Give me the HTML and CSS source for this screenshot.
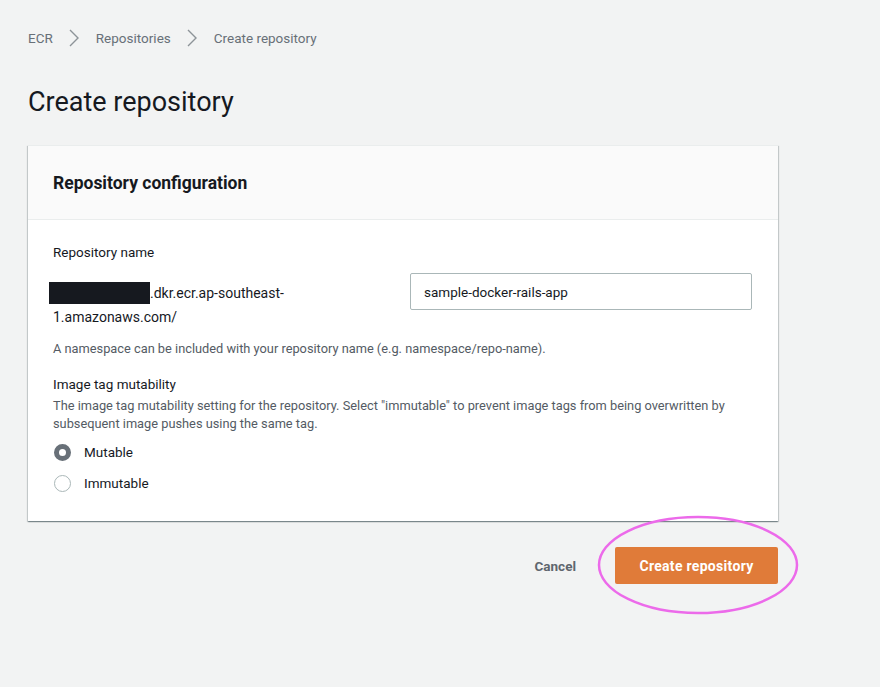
FILE: index.html
```html
<!DOCTYPE html>
<html>
<head>
<meta charset="utf-8">
<link rel="stylesheet" href="styles.css">
</head>
<body>
<div class="page">
  <nav class="crumbs">
    <span class="crumb">ECR</span>
    <svg class="chev" width="12" height="20" viewBox="0 0 12 20"><path d="M2 2 L10 10 L2 18" fill="none" stroke="#8d9398" stroke-width="1.4"/></svg>
    <span class="crumb">Repositories</span>
    <svg class="chev" width="12" height="20" viewBox="0 0 12 20"><path d="M2 2 L10 10 L2 18" fill="none" stroke="#8d9398" stroke-width="1.4"/></svg>
    <span class="crumb">Create repository</span>
  </nav>
  <h1 class="title">Create repository</h1>
  <section class="card">
    <header class="card-head">Repository configuration</header>
    <div class="card-body">
      <div class="label">Repository name</div>
      <div class="name-row">
        <div class="prefix"><span class="redact"></span>.dkr.ecr.ap-southeast-<br>1.amazonaws.com/</div>
        <div class="input">sample-docker-rails-app</div>
      </div>
      <div class="hint">A namespace can be included with your repository name (e.g. namespace/repo-name).</div>
      <div class="label label2">Image tag mutability</div>
      <div class="desc">The image tag mutability setting for the repository. Select "immutable" to prevent image tags from being overwritten by subsequent image pushes using the same tag.</div>
      <div class="radios">
        <div class="radio"><span class="dot on"></span><span>Mutable</span></div>
        <div class="radio"><span class="dot"></span><span>Immutable</span></div>
      </div>
    </div>
  </section>
  <div class="actions">
    <span class="cancel">Cancel</span>
    <span class="btn-wrap">
      <span class="primary">Create repository</span>
      <svg class="circle" width="204" height="104" viewBox="0 0 204 104"><ellipse cx="102" cy="52" rx="99" ry="48" fill="none" stroke="#ec6aea" stroke-width="2.5"/></svg>
    </span>
  </div>
</div>
</body>
</html>
```
FILE: styles.css
```css
* { box-sizing: border-box; }
html, body { margin: 0; padding: 0; }
body {
  background: #f2f3f3;
  font-family: Roboto, "Liberation Sans", sans-serif;
  color: #16191f;
  width: 880px;
  height: 687px;
  overflow: hidden;
}
.page { padding: 28px 0 0 28px; width: 880px; }
.crumbs {
  display: flex;
  align-items: center;
  height: 20px;
  font-size: 13.5px;
  color: #687078;
}
.chev { margin: 0 16px 0 15px; }
.title {
  margin: 36px 0 0 0;
  font-size: 27px;
  font-weight: 400;
  line-height: 36px;
  color: #16191f;
}
.card {
  margin-top: 25px;
  width: 750px;
  background: #fff;
  box-shadow: 0 1px 1px 0 rgba(0,28,36,.3), 1px 1px 1px 0 rgba(0,28,36,.15), -1px 1px 1px 0 rgba(0,28,36,.15);
  border-top: 1px solid #eaeded;
}
.card-head {
  background: #fafafa;
  border-bottom: 1px solid #eaeded;
  height: 74px;
  padding: 0 25px;
  display: flex;
  align-items: center;
  font-size: 17.5px;
  font-weight: 700;
}
.card-body { padding: 22px 25px 28px 25px; }
.label { font-size: 13.5px; line-height: 20px; }
.name-row {
  display: flex;
  justify-content: space-between;
  margin-top: 11px;
}
.prefix {
  font-size: 14px;
  line-height: 24px;
  margin-top: 8px;
  color: #16191f;
}
.redact {
  display: inline-block;
  width: 101px;
  height: 22px;
  background: #16191f;
  vertical-align: -6px;
  margin-left: -4px;
}
.input {
  width: 342px;
  height: 37px;
  margin-right: 1px;
  border: 1px solid #aab7b8;
  border-radius: 2px;
  padding: 0 13px;
  display: flex;
  align-items: center;
  font-size: 13.5px;
}
.hint { margin-top: 11px; font-size: 12.8px; color: #545b64; line-height: 18px; }
.label2 { margin-top: 16px; }
.desc { margin-top: 3px; font-size: 12.8px; color: #545b64; line-height: 18px; width: 700px; }
.radios { margin-top: 9px; display: flex; flex-direction: column; gap: 11px; }
.radio { display: flex; align-items: center; gap: 13px; font-size: 13.5px; height: 20px; }
.dot {
  width: 17px; height: 17px; border-radius: 50%;
  border: 1px solid #aab7b8; background: #fff;
  margin-left: 1px;
}
.dot.on { border: 5px solid #687078; background: #fff; }
.actions {
  width: 750px;
  display: flex;
  justify-content: flex-end;
  align-items: center;
  margin-top: 26px;
}
.cancel { font-size: 13.5px; font-weight: 700; color: #5f666e; margin-right: 39px; }
.btn-wrap { position: relative; display: inline-block; }
.primary {
  display: flex; align-items: center; justify-content: center;
  width: 163px; height: 37px;
  background: #e07b39;
  color: #fff;
  font-size: 14px; font-weight: 700;
  letter-spacing: 0.3px;
  border-radius: 2px;
}
.circle { position: absolute; left: -19px; top: -34px; pointer-events: none; }
```
